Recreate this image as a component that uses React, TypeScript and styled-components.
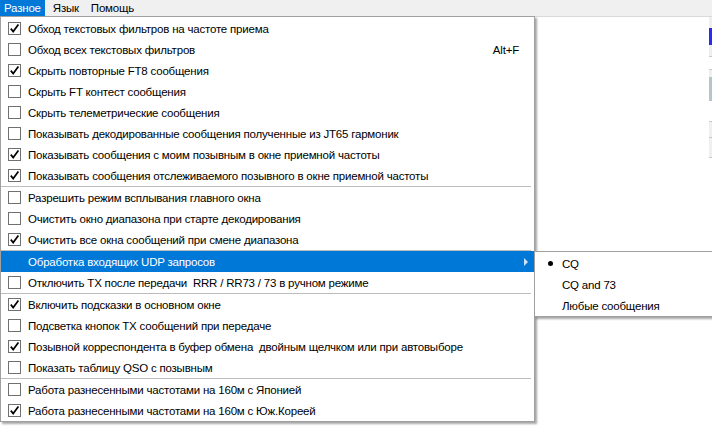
import styled, { createGlobalStyle } from 'styled-components';

const GlobalStyle = createGlobalStyle`
  html, body {
    margin: 0;
    padding: 0;
    background: #ffffff;
    overflow: hidden;
  }
  body {
    font-family: 'Liberation Sans', Arial, sans-serif;
    font-size: 11.5px;
    letter-spacing: -0.2px;
    color: #000;
  }
`;

const Window = styled.div`
  position: relative;
  width: 712px;
  height: 429px;
  display: flex;
  flex-direction: column;
  background: #fff;
  overflow: hidden;
`;

const MenuBar = styled.div`
  height: 16px;
  display: flex;
  gap: 4px;
  background: #f0f0f0;
  border-bottom: 1px solid #d9d9d9;
`;

const BarItem = styled.div<{ $open?: boolean }>`
  height: 16px;
  line-height: 16px;
  padding: 0 4px;
  background: ${({ $open }) => ($open ? '#0078d7' : 'transparent')};
  color: ${({ $open }) => ($open ? '#fff' : '#000')};
`;

const Body = styled.div`
  flex: 1;
  display: flex;
  justify-content: flex-end;
`;

const SideStrip = styled.div`
  width: 3px;
  display: flex;
  flex-direction: column;
`;

const StripBlock = styled.div<{ $h: number; $bg: string; $edge?: string }>`
  height: ${({ $h }) => $h}px;
  background: ${({ $bg }) => $bg};
  border-bottom: ${({ $edge }) => ($edge ? `1px solid ${$edge}` : 'none')};
`;

const Popup = styled.div`
  position: absolute;
  left: 0;
  top: 16px;
  width: 533px;
  padding: 1px 0 0;
  background: #fff;
  border: 1px solid #a0a0a0;
  box-shadow: 2px 2px 2px rgba(0, 0, 0, 0.35);
  display: flex;
  flex-direction: column;
`;

const SubPopup = styled(Popup)`
  left: 534px;
  top: 251px;
  width: 180px;
`;

const Row = styled.div<{ $active?: boolean }>`
  height: 21px;
  display: flex;
  align-items: center;
  padding: 0 15px 0 7px;
  white-space: pre;
  background: ${({ $active }) => ($active ? '#0078d7' : 'transparent')};
  color: ${({ $active }) => ($active ? '#fff' : '#000')};
`;

const Box = styled.span`
  width: 11px;
  height: 11px;
  border: 1px solid #707070;
  background: #fff;
  margin-right: 7px;
  display: flex;
  align-items: center;
  justify-content: center;
  flex-shrink: 0;
`;

const Spacer = styled.span`
  width: 20px;
  flex-shrink: 0;
`;

const Label = styled.span`
  flex: 1;
`;

const Shortcut = styled.span`
  margin-left: 20px;
`;

const Arrow = styled.span`
  width: 0;
  height: 0;
  margin-right: -9px;
  border-top: 4px solid transparent;
  border-bottom: 4px solid transparent;
  border-left: 4px solid #cfe3f5;
`;

const Separator = styled.div`
  height: 1px;
  margin-right: 3px;
  background: #bdbdbd;
`;

const SubRow = styled.div`
  height: 21px;
  display: flex;
  align-items: center;
  padding-left: 27px;
  position: relative;
`;

const Bullet = styled.span`
  position: absolute;
  left: 13px;
  top: 8px;
  width: 5px;
  height: 5px;
  border-radius: 50%;
  background: #000;
`;

const Check = () => (
  <svg width="11" height="11" viewBox="0 0 11 11">
    <path d="M1.8 5.6 L4.2 8.6 L9.4 1.6" fill="none" stroke="#000" strokeWidth="1.7" />
  </svg>
);

type Item = { text: string; checked?: boolean; shortcut?: string };

const groups: Item[][] = [
  [
    { text: 'Обход текстовых фильтров на частоте приема', checked: true },
    { text: 'Обход всех текстовых фильтров', shortcut: 'Alt+F' },
    { text: 'Скрыть повторные FT8 сообщения', checked: true },
    { text: 'Скрыть FT контест сообщения' },
    { text: 'Скрыть телеметрические сообщения' },
    { text: 'Показывать декодированные сообщения полученные из JT65 гармоник' },
    { text: 'Показывать сообщения с моим позывным в окне приемной частоты', checked: true },
    { text: 'Показывать сообщения отслеживаемого позывного в окне приемной частоты', checked: true },
  ],
  [
    { text: 'Разрешить режим всплывания главного окна' },
    { text: 'Очистить окно диапазона при старте декодирования' },
    { text: 'Очистить все окна сообщений при смене диапазона', checked: true },
  ],
];

const afterUdp: Item[][] = [
  [{ text: 'Отключить TX после передачи  RRR / RR73 / 73 в ручном режиме' }],
  [
    { text: 'Включить подсказки в основном окне', checked: true },
    { text: 'Подсветка кнопок TX сообщений при передаче' },
    { text: 'Позывной корреспондента в буфер обмена  двойным щелчком или при автовыборе', checked: true },
    { text: 'Показать таблицу QSO с позывным' },
  ],
  [
    { text: 'Работа разнесенными частотами на 160м с Японией' },
    { text: 'Работа разнесенными частотами на 160м с Юж.Кореей', checked: true },
  ],
];

const CheckRow = ({ item }: { item: Item }) => (
  <Row>
    <Box>{item.checked && <Check />}</Box>
    <Label>{item.text}</Label>
    {item.shortcut && <Shortcut>{item.shortcut}</Shortcut>}
  </Row>
);

export default function App() {
  return (
    <>
      <GlobalStyle />
      <Window>
        <MenuBar>
          <BarItem $open>Разное</BarItem>
          <BarItem>Язык</BarItem>
          <BarItem>Помощь</BarItem>
        </MenuBar>
        <Body>
          <SideStrip>
            <StripBlock $h={11} $bg="#eeeeee" />
            <StripBlock $h={17} $bg="#2a2af5" />
            <StripBlock $h={11} $bg="#eeeeee" $edge="#c8c8c8" />
            <StripBlock $h={12} $bg="#ffffff" $edge="#c8c8c8" />
            <StripBlock $h={7} $bg="#f0f0f0" />
            <StripBlock $h={24} $bg="#b3c6cd" />
            <StripBlock $h={20} $bg="#ffffff" $edge="#c8c8c8" />
            <StripBlock $h={15} $bg="#f0f0f0" $edge="#c8c8c8" />
            <StripBlock $h={19} $bg="#f0f0f0" $edge="#c8c8c8" />
          </SideStrip>
        </Body>

        <Popup>
          {groups.map((g, gi) => (
            <div key={gi}>
              {g.map((item) => (
                <CheckRow key={item.text} item={item} />
              ))}
              <Separator />
            </div>
          ))}
          <Row $active>
            <Spacer />
            <Label>Обработка входящих UDP запросов</Label>
            <Arrow />
          </Row>
          {afterUdp.map((g, gi) => (
            <div key={gi}>
              {g.map((item) => (
                <CheckRow key={item.text} item={item} />
              ))}
              {gi < afterUdp.length - 1 && <Separator />}
            </div>
          ))}
        </Popup>

        <SubPopup>
          <SubRow>
            <Bullet />
            CQ
          </SubRow>
          <SubRow>CQ and 73</SubRow>
          <SubRow>Любые сообщения</SubRow>
        </SubPopup>
      </Window>
    </>
  );
}
